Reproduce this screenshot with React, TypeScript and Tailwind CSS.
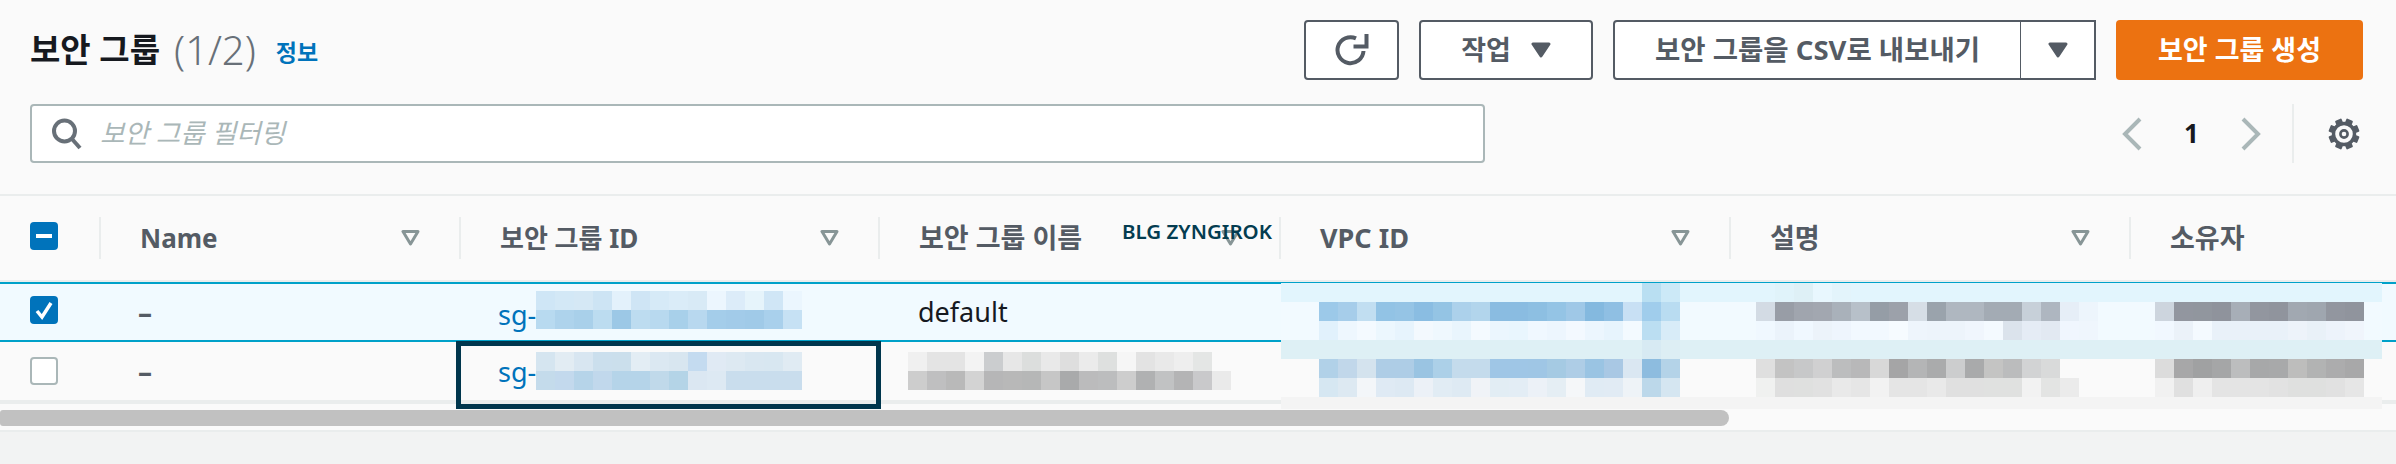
const sgTop1 = ["#cfe6f6", "#d3e8f6", "#d5e8f5", "#cde4f4", "#e3f1fb", "#cfe5f5", "#d6eaf7", "#daecf8", "#d8eaf6", "#ecf6fe", "#dcecf9", "#e6f4fb", "#d0e6f6", "#ebf6fe"];
const sgBot1 = ["#b8daf0", "#aed3ec", "#a9d0ea", "#bcdcf0", "#9cc8e6", "#bddcf0", "#b8d9ef", "#a8d0ea", "#b8d8ef", "#a4cdea", "#a2cbe9", "#a0cae8", "#a9d0ec", "#c6e1f4"];
const sgTop2 = ["#d5e5f0", "#e2ecf3", "#d8e6f1", "#cbdfed", "#cbdfec", "#e3edf4", "#dbe8f2", "#d8e6f0", "#c4dbf0", "#e0eaf4", "#dde9f2", "#d9e7f1", "#d8e7f1", "#e0ebf3"];
const sgBot2 = ["#c4dbeb", "#c3d9ed", "#b6d4e9", "#c1d8ec", "#b5d4e9", "#b5d4e9", "#c0d9ea", "#b4d4e7", "#dbe7f2", "#dde9f3", "#c9dded", "#c9dded", "#c9dded", "#c9dded"];
const nameTop = ["#f0f0f0", "#e4e4e4", "#e4e4e4", "#f3f3f3", "#cbcdcf", "#e7e7e7", "#dcdedd", "#e9e9e9", "#dedede", "#ebebeb", "#dee0df", "#f6f6f6", "#e3e3e3", "#e9e9e9", "#eeeeee", "#e4e6e5", "#fafafa"];
const nameBot = ["#cdcdcd", "#bfbfc0", "#b9b9b9", "#d3d3d3", "#b6b6b7", "#b8b8b8", "#b6b7b7", "#c6c6c6", "#a9aaab", "#bbbbbc", "#bcbdbe", "#cdcdcd", "#b0b1b2", "#c1c2c3", "#b4b4b5", "#c9c9cb", "#eaeaea"];

// rows of the patch over the right side, keyed by the block index where a run starts
const patchRows: { bg: string; runs: Record<number, string[]> }[] = [
  { bg: "#e2f5fd", runs: { 19: ["#b9dff2", "#cce9f7"], 26: ["#e0f3fa", "#def0f6", "#e8f7fe", "#e3f4fb"] } },
  {
    bg: "#f2faff",
    runs: {
      2: ["#9cc9e9", "#a6cdea", "#c1def1", "#92c3e5", "#95c4e5", "#8abde2", "#94c4e4", "#acd1eb", "#b2d5ec", "#8abce1", "#8abce1", "#8dbfe2", "#94c4e5", "#9fc8e7", "#84b9df", "#8fbfe3", "#c8e0f4", "#a0cdec", "#b9dcf1"],
      25: ["#d3dbe4", "#989da6", "#a0a5ae", "#a2a7b0", "#a9b1ba", "#b7c0c9", "#959da6", "#9ca1aa", "#d6dee6", "#9aa3ac", "#afb7c0", "#afb7c0", "#a3abb4", "#a3abb4", "#c7d0d9", "#aeb6c0", "#e6eef7", "#edf5fc"],
      46: ["#cdd5de", "#92969f", "#91969e", "#8f939c", "#a7aeb7", "#92969f", "#90949d", "#a1a8b1", "#9fa6af", "#92969f", "#90949d"],
    },
  },
  {
    bg: "#f2faff",
    runs: {
      2: ["#e1f1fc", "#eef7fe", "#f4faff", "#ecf7fe", "#e7f4fd", "#f3f9fe", "#eff8fe", "#e9f5fd", "#f4faff", "#ebf6fe", "#e9f6fe", "#f0f8ff", "#edf6fe", "#f3f9ff", "#ecf6fe", "#e7f4fd", "#f3faff", "#bbdef2", "#d8ecf8"],
      25: ["#f0f8ff", "#ebf3fb", "#f0f8ff", "#ecf3fa", "#eef5fd", "#f2f9ff", "#f2f9ff", "#f6fbff", "#eef5fc", "#edf4fb", "#edf4fb", "#f0f6fd", "#f4faff", "#dbe3ec", "#e5ecf5", "#e2e9f2", "#f0f6fe", "#eff6fd"],
      46: ["#f1f8ff", "#ebf2f9", "#f4faff", "#e9f1f9", "#e9f1f9", "#e9f1f9", "#e9f1f9", "#edf3fa", "#e9f1f8", "#edf3fb", "#f0f5fc"],
    },
  },
  { bg: "#def0f5", runs: { 19: ["#d7eaf3", "#ddeef4"] } },
  {
    bg: "#fafafa",
    runs: {
      2: ["#b1d1e8", "#c1d7ea", "#d4e3ee", "#aecde6", "#aecde6", "#9ac4e2", "#acd0e8", "#c4dbec", "#c4dbec", "#9fc6e6", "#9fc6e6", "#9fc6e5", "#a5cae3", "#aecde6", "#9ac4e3", "#a9c8e4", "#dae7f2", "#8dbcdf", "#b4d3e8"],
      25: ["#dfdfdf", "#c3c3c3", "#c7c8c9", "#d0d0d1", "#bcbdbe", "#b8b8b9", "#d8d8d8", "#a5a5a6", "#b4b5b6", "#aaabac", "#cccdce", "#a9aaab", "#c4c4c3", "#bbbcbd", "#d2d3d4", "#d9dada"],
      46: ["#dcdcdc", "#a7a7a8", "#a0a1a2", "#a5a6a7", "#bcbdbe", "#a7a8a9", "#a8a9aa", "#bdbdbc", "#b2b3b3", "#acacad", "#a8a8a9"],
    },
  },
  {
    bg: "#fafafa",
    runs: {
      2: ["#d6e7f2", "#dde9f2", "#f3f6f9", "#dfeaf4", "#dde9f3", "#ecf1f7", "#e1ecf4", "#deeaf3", "#f0f3f7", "#e2edf4", "#e3edf5", "#ecf1f7", "#e5eef4", "#f5f7f9", "#e0ebf4", "#e1ebf4", "#eef3f7", "#bcd8ea", "#d5e6f1"],
      25: ["#f0f1f0", "#dfdfdf", "#dfe0df", "#e1e1e1", "#e9e9e9", "#e6e6e6", "#f2f2f2", "#e5e5e5", "#e5e5e5", "#e9e9e9", "#e0e0e0", "#e0e0e0", "#e0e1e0", "#e0e1e0", "#f2f2f2", "#e3e4e3", "#ebebeb"],
      46: ["#f1f1f1", "#e0e0e0", "#efefef", "#e4e4e4", "#e4e4e4", "#e4e4e4", "#e2e2e2", "#dfe0df", "#dfe0df", "#e1e1e1", "#e6e6e6"],
    },
  },
];

const Blocks = ({ colors }: { colors: string[] }) => (
  <div className="flex">
    {colors.map((c, i) => (
      <div key={i} className="w-[19px] h-[19px] shrink-0" style={{ backgroundColor: c }} />
    ))}
  </div>
);

const Patch = () => (
  <div className="absolute left-[1281px] top-[283px] w-[1101px] overflow-hidden">
    {patchRows.map((row, r) => {
      const cells = Array.from({ length: 58 }, () => row.bg);
      Object.entries(row.runs).forEach(([start, colors]) => {
        colors.forEach((c, i) => (cells[Number(start) + i] = c));
      });
      return <Blocks key={r} colors={cells} />;
    })}
    <div className="h-[12px] bg-[#f4f4f4]" />
  </div>
);

const Caret = () => (
  <svg width="20" height="16" viewBox="0 0 20 16">
    <path d="M2 2h16l-8 12z" fill="#545b64" stroke="#545b64" strokeWidth="3" strokeLinejoin="round" />
  </svg>
);

const FilterIcon = () => (
  <svg width="19" height="16" viewBox="0 0 19 16" className="shrink-0">
    <path d="M2 1.5h15l-7.5 12.5z" fill="none" stroke="#879596" strokeWidth="3" strokeLinejoin="round" />
  </svg>
);

const Gear = () => (
  <svg width="32" height="32" viewBox="0 0 32 32">
    {[0, 45, 90, 135, 180, 225, 270, 315].map((a) => (
      <rect key={a} x="12.5" y="0.5" width="7" height="6" rx="1" fill="#545b64" transform={`rotate(${a + 22.5} 16 16)`} />
    ))}
    <circle cx="16" cy="16" r="10.5" fill="none" stroke="#545b64" strokeWidth="3.4" />
    <circle cx="16" cy="16" r="3.6" fill="none" stroke="#545b64" strokeWidth="2.6" />
  </svg>
);

const HeaderCell = ({
  label,
  size = "text-[27px]",
  filter = true,
  watermark = false,
}: {
  label: string;
  size?: string;
  filter?: boolean;
  watermark?: boolean;
}) => (
  <div className="relative flex items-center h-full">
    <div className="w-[2px] h-[42px] bg-[#eaeded] shrink-0" />
    <span className={`ml-[39px] ${size} font-bold text-[#545b64] whitespace-nowrap`}>{label}</span>
    {filter && (
      <span className="ml-auto mr-[39px] flex">
        <FilterIcon />
      </span>
    )}
    {watermark && (
      <span className="absolute left-[244px] top-[19px] text-[20.5px] leading-[32px] font-semibold text-[#033c50] whitespace-nowrap">
        BLG ZYNGIROK
      </span>
    )}
  </div>
);

const Sg = ({ top, bottom }: { top: string[]; bottom: string[] }) => (
  <div className="flex items-center h-full pl-[39px]">
    <span className="text-[27px] text-[#0073bb] mt-[6px]">sg-</span>
    <div className="-mt-[5px]">
      <Blocks colors={top} />
      <Blocks colors={bottom} />
    </div>
  </div>
);

const rowGrid = "grid grid-cols-[99px_360px_419px_401px_450px_400px_1fr]";

export default function App() {
  return (
    <div className="relative w-full h-[464px] overflow-hidden bg-[#f2f3f3] font-['Noto_Sans','Noto_Sans_CJK_KR',sans-serif]">
      <div className="bg-[#fafafa] border-b-2 border-[#eaeded]">
        <div className="px-[30px] pt-[20px] h-[194px]">
          <div className="flex items-center h-[60px]">
            <h1 className="flex items-center text-[33px] font-bold text-[#16191f] whitespace-nowrap">
              보안 그룹
              <span className="ml-[14px] text-[40px] leading-[48px] font-light text-[#687078]">(1/2)</span>
            </h1>
            <a className="ml-[20px] mt-[4px] text-[23px] font-bold text-[#0073bb]">정보</a>
            <div className="ml-auto flex items-stretch h-[60px] text-[27px] font-bold text-[#545b64] mr-[3px]">
              <button className="w-[95px] flex items-center justify-center bg-white border-2 border-[#545b64] rounded-[4px]">
                <svg width="34" height="34" viewBox="0 0 34 34">
                  <path d="M21 5.4A13 13 0 1 0 28.5 18" fill="none" stroke="#545b64" strokeWidth="4" />
                  <path d="M31.5 1v12.5h-13" fill="none" stroke="#545b64" strokeWidth="4" />
                </svg>
              </button>
              <button className="ml-[20px] w-[174px] flex items-center justify-center gap-[20px] bg-white border-2 border-[#545b64] rounded-[4px]">
                작업
                <Caret />
              </button>
              <div className="ml-[20px] flex bg-white border-2 border-[#545b64] rounded-l-[4px]">
                <button className="w-[406px] flex items-center justify-center whitespace-nowrap border-r border-[#545b64] text-[27.5px]">
                  보안 그룹을 CSV로 내보내기
                </button>
                <button className="w-[73px] flex items-center justify-center">
                  <Caret />
                </button>
              </div>
              <button className="ml-[20px] w-[247px] flex items-center justify-center bg-[#ec7211] text-white rounded-[4px] whitespace-nowrap">
                보안 그룹 생성
              </button>
            </div>
          </div>
          <div className="flex items-center mt-[24px] h-[59px]">
            <div className="w-[1455px] h-full flex items-center bg-white border-2 border-[#aab7b8] rounded-[4px] pl-[19px]">
              <svg width="32" height="32" viewBox="0 0 32 32" className="shrink-0 mt-[1px]">
                <circle cx="13.5" cy="13" r="10.5" fill="none" stroke="#687078" strokeWidth="4" />
                <path d="M21 21l8 9" stroke="#687078" strokeWidth="4" />
              </svg>
              <span className="ml-[17px] text-[26.6px] italic text-[#aab7b8] whitespace-nowrap">보안 그룹 필터링</span>
            </div>
            <div className="ml-auto flex items-center h-full mr-[6px]">
              <svg width="22" height="34" viewBox="0 0 22 34">
                <path d="M19 2L4 17l15 15" fill="none" stroke="#aab7b8" strokeWidth="4" />
              </svg>
              <span className="w-[97px] text-center text-[26px] font-bold text-[#16191f]">1</span>
              <svg width="22" height="34" viewBox="0 0 22 34">
                <path d="M3 2l15 15L3 32" fill="none" stroke="#aab7b8" strokeWidth="4" />
              </svg>
              <div className="ml-[30px] w-[2px] h-full bg-[#eaeded]" />
              <div className="ml-[34px] flex">
                <Gear />
              </div>
            </div>
          </div>
        </div>

        <div className="border-y-2 border-[#eaeded] h-[88px]">
          <div className={`${rowGrid} h-full`}>
            <div className="flex items-center pl-[30px]">
              <div className="w-[28px] h-[28px] -mt-[4px] rounded-[4px] bg-[#0073bb] flex items-center justify-center">
                <div className="w-[16px] h-[4px] bg-white" />
              </div>
            </div>
            <HeaderCell label="Name" size="text-[26px]" />
            <HeaderCell label="보안 그룹 ID" size="text-[26px]" />
            <HeaderCell label="보안 그룹 이름" watermark />
            <HeaderCell label="VPC ID" />
            <HeaderCell label="설명" />
            <HeaderCell label="소유자" filter={false} />
          </div>
        </div>

        <div className={`${rowGrid} h-[60px] border-y-2 border-[#00a1c9] bg-[#f1faff]`}>
          <div className="flex items-center pl-[30px]">
            <div className="w-[28px] h-[28px] -mt-[4px] rounded-[4px] bg-[#0073bb] flex items-center justify-center">
              <svg width="20" height="20" viewBox="0 0 20 20">
                <path d="M3 11l5 6 9-14" fill="none" stroke="#fff" strokeWidth="3.5" />
              </svg>
            </div>
          </div>
          <div className="flex items-center pl-[39px] text-[28px] font-bold text-[#545b64]">–</div>
          <Sg top={sgTop1} bottom={sgBot1} />
          <div className="flex items-center pl-[40px] text-[27px] text-[#16191f]">default</div>
        </div>

        <div className={`${rowGrid} h-[62px] border-b-4 border-[#eaeded]`}>
          <div className="flex items-center pl-[30px]">
            <div className="w-[28px] h-[28px] rounded-[4px] bg-white border-2 border-[#aab7b8]" />
          </div>
          <div className="flex items-center pl-[39px] text-[28px] font-bold text-[#545b64]">–</div>
          <div className="relative">
            <div className="flex items-center h-full pl-[39px]">
              <span className="text-[27px] text-[#0073bb] mt-[3px]">sg-</span>
              <div>
                <Blocks colors={sgTop2} />
                <Blocks colors={sgBot2} />
              </div>
            </div>
            <div className="absolute -left-[3px] -right-[3px] -top-px h-[68px] border-[5px] border-[#00364d]" />
          </div>
          <div className="flex items-center pl-[30px]">
            <div>
              <Blocks colors={nameTop} />
              <Blocks colors={nameBot} />
            </div>
          </div>
        </div>

        <div className="pt-[6px] pb-[4px]">
          <div className="w-[1729px] h-[16px] bg-[#c1c1c1] rounded-r-lg rounded-l-[3px]" />
        </div>
      </div>
      <Patch />
    </div>
  );
}
